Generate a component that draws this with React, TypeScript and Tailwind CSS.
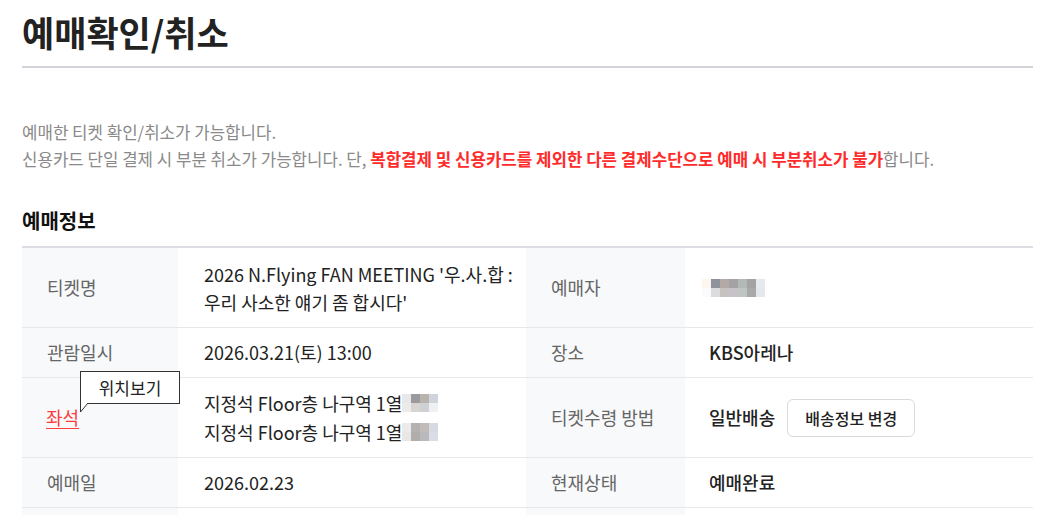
import React from 'react';

const FONT = { fontFamily: '"Noto Sans CJK KR", "Noto Sans", sans-serif' };

function Blur({ cells }: { cells: string[][] }) {
  return (
    <span className="inline-flex flex-col align-middle">
      {cells.map((row, i) => (
        <span key={i} className="flex">
          {row.map((c, j) => (
            <span key={j} className="block w-[9px] h-[9px]" style={{ backgroundColor: c }} />
          ))}
        </span>
      ))}
    </span>
  );
}

function Label({ children, wide }: { children: React.ReactNode; wide?: boolean }) {
  return (
    <div
      className={
        (wide ? 'w-[159px]' : 'w-[156px]') +
        ' shrink-0 bg-[#f8f9fa] pl-[25px] flex items-center text-[18px] text-[#666]'
      }
    >
      {children}
    </div>
  );
}

export default function App() {
  return (
    <div className="h-[515px] overflow-hidden bg-white px-[22px] pt-[6px] text-[#222]" style={FONT}>
      <h1 className="w-[1011px] border-b-2 border-[#d3d3d9] pb-[8px] text-[35px] font-bold leading-[52px] text-[#222]">
        예매확인/취소
      </h1>

      <div className="mt-[51px] text-[16.8px] leading-[27px] text-[#8a8a8a]">
        <p>예매한 티켓 확인/취소가 가능합니다.</p>
        <p>
          신용카드 단일 결제 시 부분 취소가 가능합니다. 단,{' '}
          <span className="font-bold text-[#ff2b2b]">
            복합결제 및 신용카드를 제외한 다른 결제수단으로 예매 시 부분취소가 불가
          </span>
          합니다.
        </p>
      </div>

      <h2 className="mt-[35px] text-[20px] font-bold leading-[26px] text-[#111]">예매정보</h2>

      <div className="mt-[12px] w-[1011px] border-t-2 border-[#dcdce2]">
        <div className="flex h-[80px] border-b border-[#e8e8ea]">
          <Label>티켓명</Label>
          <div className="flex w-[348px] shrink-0 items-center pl-[26px] pr-[12px] text-[18px] leading-[28px]">
            2026 N.Flying FAN MEETING '우.사.합 : 우리 사소한 얘기 좀 합시다'
          </div>
          <Label wide>예매자</Label>
          <div className="flex flex-1 items-center pl-[17px]">
            <Blur
              cells={[
                ['#fdf6ef', '#8f949c', '#b3aaa6', '#a5a2a6', '#b2bab6', '#a3a3a3', '#e6e9ee'],
                ['#fafbfc', '#dcdcdc', '#c6c2c0', '#c5c3c8', '#bfc5c2', '#a9a9a9', '#e4e7ec'],
              ]}
            />
          </div>
        </div>

        <div className="flex h-[50px] border-b border-[#e8e8ea]">
          <Label>관람일시</Label>
          <div className="flex w-[348px] shrink-0 items-center pl-[26px] text-[18px]">2026.03.21(토) 13:00</div>
          <Label wide>장소</Label>
          <div className="flex flex-1 items-center pl-[24px] text-[18px] font-medium">KBS아레나</div>
        </div>

        <div className="flex h-[80px] border-b border-[#e8e8ea]">
          <div className="relative flex w-[156px] shrink-0 items-center bg-[#f8f9fa] pl-[24px] text-[18px]">
            <span className="text-[#ff3b3b] underline underline-offset-[3px]">좌석</span>
            <div className="absolute left-[58px] top-[-7px] flex h-[33px] w-[100px] items-center justify-center border border-[#333] bg-white text-[17px] text-[#222]">
              위치보기
              <svg className="absolute left-[-1px] top-[31px]" width="10" height="10" viewBox="0 0 10 10">
                <path d="M0.5 0 L0.5 9 L8 0" fill="white" stroke="#333" strokeWidth="1" />
              </svg>
            </div>
          </div>
          <div className="flex w-[348px] shrink-0 flex-col justify-center pl-[26px] text-[18px] leading-[29px]">
            <div className="flex items-center">
              지정석 Floor층 나구역 1열
              <Blur
                cells={[
                  ['#e8e8ea', '#9a999c', '#b9b3ae', '#d0d5dd'],
                  ['#ecebec', '#d8d4d2', '#cfd0d4', '#eef0f3'],
                ]}
              />
            </div>
            <div className="flex items-center">
              지정석 Floor층 나구역 1열
              <Blur
                cells={[
                  ['#eceaea', '#b5b1b0', '#c1bcb8', '#d6dbe3'],
                  ['#e8e7e6', '#b0adab', '#b9b9bd', '#d9dee6'],
                ]}
              />
            </div>
          </div>
          <Label wide>티켓수령 방법</Label>
          <div className="flex flex-1 items-center gap-[12px] pl-[24px] text-[18px] font-medium">
            일반배송
            <button className="h-[38px] rounded-[6px] border border-[#d9d9d9] bg-white px-[17px] text-[16px] font-medium text-[#222]">
              배송정보 변경
            </button>
          </div>
        </div>

        <div className="flex h-[50px] border-b border-[#e8e8ea]">
          <Label>예매일</Label>
          <div className="flex w-[348px] shrink-0 items-center pl-[26px] text-[18px]">2026.02.23</div>
          <Label wide>현재상태</Label>
          <div className="flex flex-1 items-center pl-[24px] text-[18px] font-medium">예매완료</div>
        </div>

        <div className="flex h-[50px]">
          <div className="w-[156px] shrink-0 bg-[#f8f9fa]" />
          <div className="w-[348px] shrink-0" />
          <div className="w-[159px] shrink-0 bg-[#f8f9fa]" />
          <div className="flex-1" />
        </div>
      </div>
    </div>
  );
}
